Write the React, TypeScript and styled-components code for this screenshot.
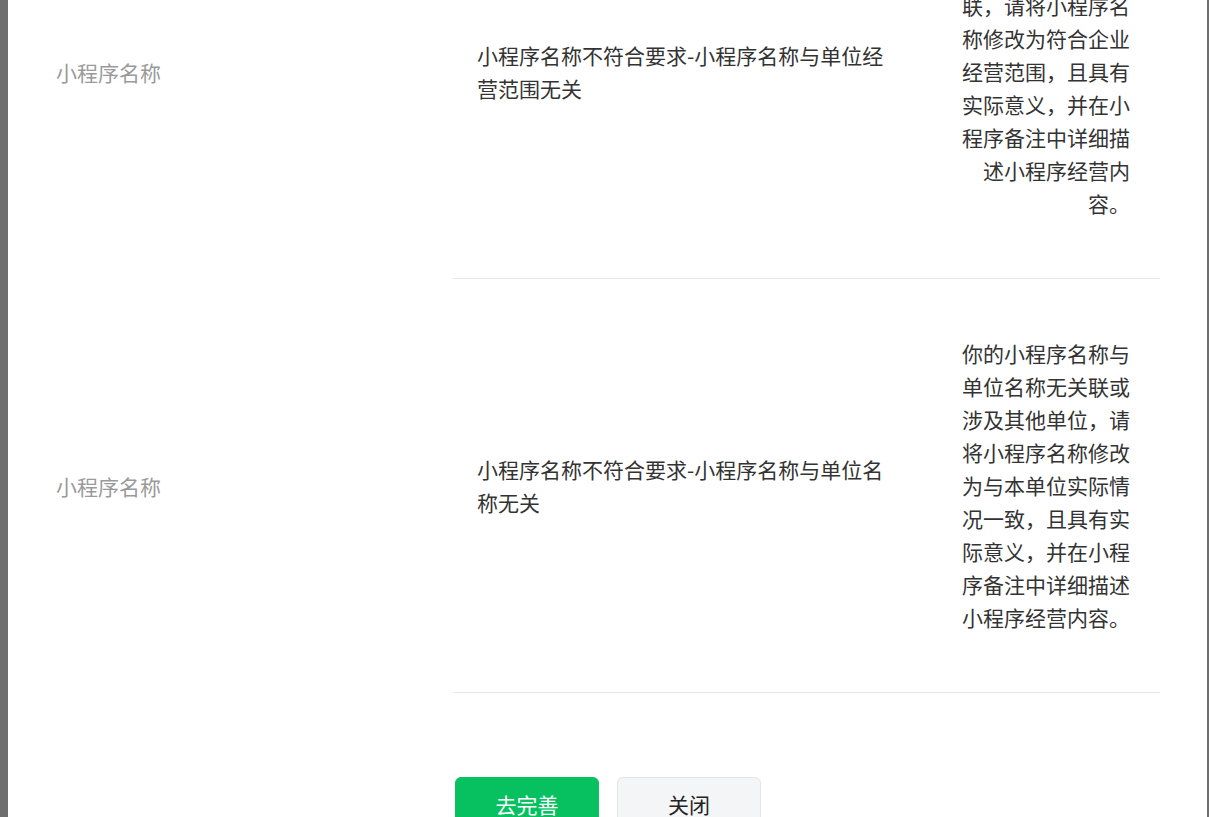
import React from "react";
import styled, { createGlobalStyle } from "styled-components";

const GlobalStyle = createGlobalStyle`
  html, body {
    margin: 0;
    padding: 0;
    height: 100%;
    overflow: hidden;
    background-color: #6e6e6e;
    font-family: "Noto Sans CJK SC", "Noto Sans", sans-serif;
  }
`;

const Backdrop = styled.div`
  display: flex;
  height: 817px;
  padding: 0 2px 0 8px;
  overflow: hidden;
`;

const Dialog = styled.div`
  flex: 1;
  background-color: #ffffff;
  display: flex;
  flex-direction: column;
  /* content scrolled up by the dialog body */
  margin-top: -135px;
`;

const Row = styled.div`
  display: flex;
  align-items: stretch;
`;

const Label = styled.div`
  width: 445px;
  box-sizing: border-box;
  padding-left: 48px;
  display: flex;
  align-items: center;
  font-size: 21px;
  line-height: 33px;
  color: #9a9a9a;
`;

const Cells = styled.div`
  width: 707px;
  display: flex;
  align-items: center;
  border-bottom: 1px solid #e7e7e7;
`;

const Reason = styled.div`
  width: 468px;
  box-sizing: border-box;
  padding: 0 24px;
  font-size: 21px;
  line-height: 33px;
  color: #333333;
`;

const Advice = styled.div`
  width: 239px;
  box-sizing: border-box;
  padding: 58px 30px 58px 35px;
  font-size: 21px;
  line-height: 33px;
  color: #333333;
  text-align: right;
  line-break: strict;
`;

const Actions = styled.div`
  display: flex;
  gap: 18px;
  margin: 84px 0 0 447px;
`;

const Button = styled.button<{ $primary?: boolean }>`
  width: 144px;
  height: 54px;
  border-radius: 6px;
  font-family: "Noto Sans CJK SC", "Noto Sans", sans-serif;
  font-size: 21px;
  cursor: pointer;
  border: 1px solid ${(p) => (p.$primary ? "#07c160" : "#e3e4e6")};
  background-color: ${(p) => (p.$primary ? "#07c160" : "#f4f5f7")};
  color: ${(p) => (p.$primary ? "#ffffff" : "#222222")};
`;

const rows = [
  {
    label: "小程序名称",
    reason: "小程序名称不符合要求-小程序名称与单位经营范围无关",
    advice:
      "你的小程序名称与单位经营范围无关联，请将小程序名称修改为符合企业经营范围，且具有实际意义，并在小程序备注中详细描述小程序经营内容。",
  },
  {
    label: "小程序名称",
    reason: "小程序名称不符合要求-小程序名称与单位名称无关",
    advice:
      "你的小程序名称与单位名称无关联或涉及其他单位，请将小程序名称修改为与本单位实际情况一致，且具有实际意义，并在小程序备注中详细描述小程序经营内容。",
  },
];

export default function App() {
  return (
    <>
      <GlobalStyle />
      <Backdrop>
        <Dialog>
          {rows.map((r, i) => (
            <Row key={i}>
              <Label>{r.label}</Label>
              <Cells>
                <Reason>{r.reason}</Reason>
                <Advice>{r.advice}</Advice>
              </Cells>
            </Row>
          ))}
          <Actions>
            <Button $primary>去完善</Button>
            <Button>关闭</Button>
          </Actions>
        </Dialog>
      </Backdrop>
    </>
  );
}
